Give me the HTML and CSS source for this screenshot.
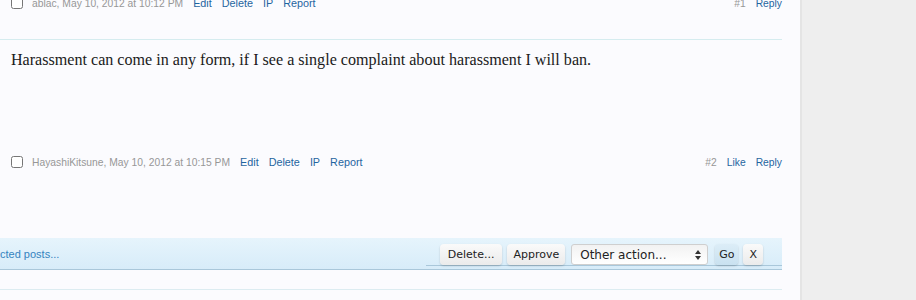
FILE: index.html
```html
<!DOCTYPE html>
<html lang="en">
<head>
  <meta charset="UTF-8" />
  <title>Thread moderation</title>
  <link rel="stylesheet" href="styles.css">
</head>
<body>

  <div class="page">
    <div class="main">

      <!-- previous post (only its footer shows) -->
      <div class="post post-first">
        <div class="meta">
          <div class="meta-left">
            <input type="checkbox" class="mod-check">
            <span class="author">ablac, May 10, 2012 at 10:12 PM</span>
            <a href="#">Edit</a>
            <a href="#">Delete</a>
            <a href="#">IP</a>
            <a href="#">Report</a>
          </div>
          <div class="meta-right">
            <span class="num">#1</span>
            <a href="#">Reply</a>
          </div>
        </div>
      </div>

      <div class="post post-second">
        <div class="message">Harassment can come in any form, if I see a single complaint about harassment I will ban.</div>
        <div class="meta">
          <div class="meta-left">
            <input type="checkbox" class="mod-check">
            <span class="author">HayashiKitsune, May 10, 2012 at 10:15 PM</span>
            <a href="#">Edit</a>
            <a href="#">Delete</a>
            <a href="#">IP</a>
            <a href="#">Report</a>
          </div>
          <div class="meta-right">
            <span class="num">#2</span>
            <a href="#">Like</a>
            <a href="#">Reply</a>
          </div>
        </div>
      </div>

      <!-- inline moderation bar -->
      <div class="inline-mod">
        <span class="selected">Selected posts...</span>
        <div class="controls">
          <button class="btn btn-wide">Delete...</button>
          <button class="btn">Approve</button>
          <div class="select-wrap">
            <select class="action-select">
              <option>Other action...</option>
            </select>
            <svg class="arrows" width="8" height="12" viewBox="0 0 8 12">
              <path d="M4 1 L7 5 L1 5 Z" fill="#333"/>
              <path d="M4 11 L7 7 L1 7 Z" fill="#333"/>
            </svg>
          </div>
          <button class="btn btn-go">Go</button>
          <button class="btn">X</button>
        </div>
      </div>

      <div class="after-bar"></div>

    </div>
  </div>

</body>
</html>
```

FILE: styles.css
```css
body {
  margin: 0;
  background: #eeeeee;
  font-family: "Liberation Sans", Arial, sans-serif;
  overflow: hidden;
}

.page {
  display: flex;
  height: 300px;
}

.main {
  width: 800px;
  background: #fbfbfe;
  border-right: 2px solid #e4e4e4;
  overflow: hidden;
}

a {
  color: #1f65a0;
  text-decoration: none;
}

.post {
  margin-right: 18px;
}

.post-first {
  margin-top: -7px;
  padding-bottom: 26px;
  border-bottom: 1px solid #d5ecef;
}

.post-second {
  padding-top: 10px;
}

.message {
  padding-left: 11px;
  font-family: "Liberation Serif", Georgia, serif;
  font-size: 16.1px;
  line-height: 20px;
  color: #1a1a1a;
  margin-bottom: 82px;
}

.meta {
  display: flex;
  justify-content: space-between;
  align-items: center;
  height: 20px;
  font-size: 10.3px;
}

.meta-left,
.meta-right {
  display: flex;
  align-items: center;
  gap: 10px;
}

.meta-left {
  padding-left: 11px;
}

.meta-left a {
  font-size: 10.8px;
}

.mod-check {
  margin: 0 -1px 0 0;
  width: 12px;
  height: 12px;
}

.author {
  color: #979797;
}

.num {
  color: #979797;
}

.inline-mod {
  margin-top: 66px;
  margin-right: 18px;
  height: 31px;
  display: flex;
  justify-content: space-between;
  align-items: center;
  background: linear-gradient(#e6f4fc, #d7ecf9);
  border-bottom: 1px solid #a9c7da;
}

.selected {
  margin-left: -22px;
  color: #3483bf;
  font-size: 11px;
}

.controls {
  display: flex;
  align-items: center;
  gap: 5px;
  padding: 0 19px 0 14px;
  border-bottom: 1px solid #a9c7da;
  align-self: flex-end;
  margin-bottom: 3px;
}

.btn {
  height: 21px;
  padding: 0 6px;
  font-family: "DejaVu Sans", Verdana, sans-serif;
  font-size: 11px;
  color: #222;
  background: linear-gradient(#fafafa, #ebebeb);
  border: none;
  border-radius: 4px;
  box-shadow: 0 1px 2px rgba(0, 0, 0, 0.18);
}

.btn-wide {
  padding: 0 8px;
}

.btn-go {
  padding: 0 4px;
  background: linear-gradient(#dcedf7, #c9e1f0);
}

.select-wrap {
  position: relative;
  display: flex;
  margin-left: 1px;
  margin-right: 2px;
}

.action-select {
  appearance: none;
  -webkit-appearance: none;
  width: 137px;
  height: 21px;
  padding: 0 8px;
  font-family: "DejaVu Sans", Verdana, sans-serif;
  font-size: 12px;
  color: #222;
  background: linear-gradient(#f2f2f2, #ffffff);
  border: 1px solid #cfcfcf;
  border-radius: 3px;
}

.arrows {
  position: absolute;
  right: 6px;
  top: 5px;
}

.after-bar {
  margin-top: 19px;
  margin-right: 18px;
  border-bottom: 1px solid #dcecf1;
}
```
